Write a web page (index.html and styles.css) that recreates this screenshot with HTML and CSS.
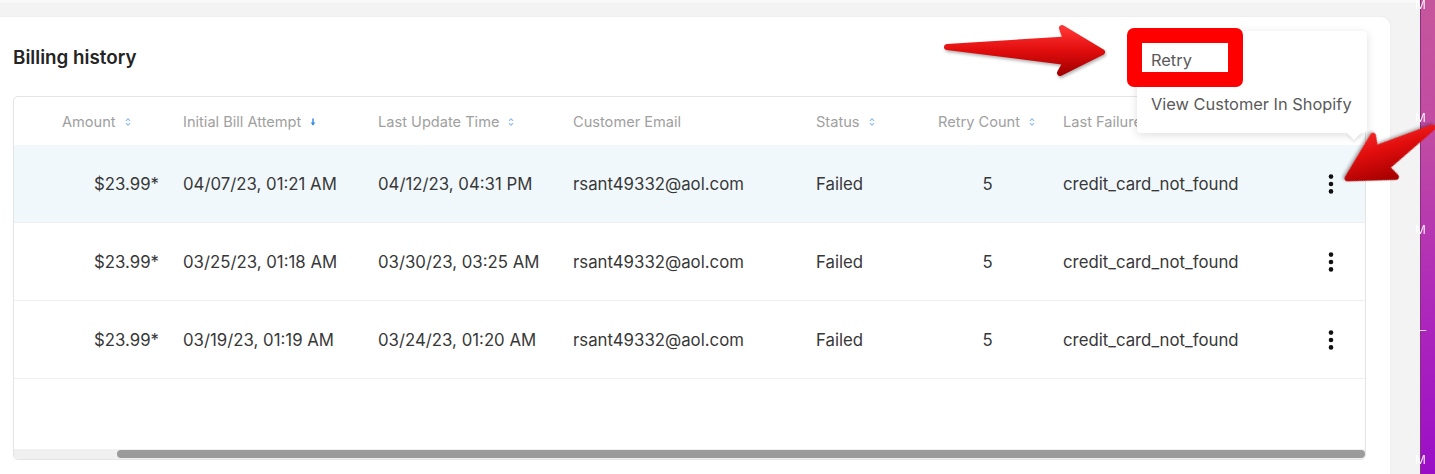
FILE: index.html
```html
<html>
<head>
	<link rel="stylesheet" href="styles.css">
</head>
<body>
<div class="screen">
	<div class="app">
		<div class="card">
			<h2 class="card-title">Billing history</h2>
			<div class="table-wrap">
				<div class="row head">
					<div class="cell amount-head">Amount <svg class="sort" width="6" height="10" viewBox="0 0 6 10"><path d="M1 3.8 L3 1.8 L5 3.8 M1 6.2 L3 8.2 L5 6.2"/></svg></div>
					<div class="cell">Initial Bill Attempt <svg class="sort-down" width="6" height="10" viewBox="0 0 6 10"><path d="M3 1.5 V8"/><path class="tip" d="M0.6 5.4 L3 8.6 L5.4 5.4 Z"/></svg></div>
					<div class="cell">Last Update Time <svg class="sort" width="6" height="10" viewBox="0 0 6 10"><path d="M1 3.8 L3 1.8 L5 3.8 M1 6.2 L3 8.2 L5 6.2"/></svg></div>
					<div class="cell">Customer Email</div>
					<div class="cell">Status <svg class="sort" width="6" height="10" viewBox="0 0 6 10"><path d="M1 3.8 L3 1.8 L5 3.8 M1 6.2 L3 8.2 L5 6.2"/></svg></div>
					<div class="cell">Retry Count <svg class="sort" width="6" height="10" viewBox="0 0 6 10"><path d="M1 3.8 L3 1.8 L5 3.8 M1 6.2 L3 8.2 L5 6.2"/></svg></div>
					<div class="cell">Last Failure Reason</div>
					<div class="cell"></div>
				</div>

				<div class="row body-row active">
					<div class="cell amount">$23.99*</div>
					<div class="cell">04/07/23, 01:21 AM</div>
					<div class="cell">04/12/23, 04:31 PM</div>
					<div class="cell">rsant49332@aol.com</div>
					<div class="cell">Failed</div>
					<div class="cell count">5</div>
					<div class="cell">credit_card_not_found</div>
					<div class="cell more"><svg width="6" height="20" viewBox="0 0 6 20"><circle cx="3" cy="2.6" r="2.3"/><circle cx="3" cy="10" r="2.3"/><circle cx="3" cy="17.4" r="2.3"/></svg></div>
				</div>
				<div class="row body-row">
					<div class="cell amount">$23.99*</div>
					<div class="cell">03/25/23, 01:18 AM</div>
					<div class="cell">03/30/23, 03:25 AM</div>
					<div class="cell">rsant49332@aol.com</div>
					<div class="cell">Failed</div>
					<div class="cell count">5</div>
					<div class="cell">credit_card_not_found</div>
					<div class="cell more"><svg width="6" height="20" viewBox="0 0 6 20"><circle cx="3" cy="2.6" r="2.3"/><circle cx="3" cy="10" r="2.3"/><circle cx="3" cy="17.4" r="2.3"/></svg></div>
				</div>
				<div class="row body-row">
					<div class="cell amount">$23.99*</div>
					<div class="cell">03/19/23, 01:19 AM</div>
					<div class="cell">03/24/23, 01:20 AM</div>
					<div class="cell">rsant49332@aol.com</div>
					<div class="cell">Failed</div>
					<div class="cell count">5</div>
					<div class="cell">credit_card_not_found</div>
					<div class="cell more"><svg width="6" height="20" viewBox="0 0 6 20"><circle cx="3" cy="2.6" r="2.3"/><circle cx="3" cy="10" r="2.3"/><circle cx="3" cy="17.4" r="2.3"/></svg></div>
				</div>

				<div class="table-space"></div>
				<div class="scrollbar"><div class="thumb"></div></div>
			</div>
		</div>
	</div>
	<div class="desktop">
		<span class="desk-label l1">M</span>
		<span class="desk-label l2">M</span>
		<span class="desk-label l3">M</span>
		<span class="desk-label l4">–</span>
		<span class="desk-label l5">M</span>
	</div>

	<div class="menu">
		<div class="menu-item">Retry</div>
		<div class="menu-item">View Customer In Shopify</div>
	</div>
	<div class="highlight"></div>

	<svg class="arrows" width="1435" height="474" viewBox="0 0 1435 474">
		<defs>
			<linearGradient id="red1" x1="0" y1="0" x2="0" y2="1">
				<stop offset="0" stop-color="#ff3434"/>
				<stop offset="0.5" stop-color="#e10d0d"/>
				<stop offset="1" stop-color="#a60000"/>
			</linearGradient>
			<linearGradient id="red2" x1="0" y1="1" x2="0.6" y2="0">
				<stop offset="0" stop-color="#ff3434"/>
				<stop offset="0.5" stop-color="#e10d0d"/>
				<stop offset="1" stop-color="#a60000"/>
			</linearGradient>
		</defs>
		<path class="arrow a1" d="M947 47 L1066 39.5 L1062 28 L1102 52 L1060 73 L1066 62 Z"/>
		<g transform="translate(1345 180) rotate(148.5)">
			<path class="arrow a2" d="M-102 -1 L-42 -11 L-45 -24 L-3 0 L-47 23 L-42 11 Z"/>
		</g>
	</svg>
</div>
</body>
</html>
```
FILE: styles.css
```css
body{
	margin: 0;
	background: #f4f4f4;
	font-family: Inter, "Liberation Sans", sans-serif;
	overflow: hidden;
}
.screen{
	position: relative;
	display: flex;
	width: 1435px;
	height: 474px;
	overflow: hidden;
	background: linear-gradient(#f8f8f8 0, #f8f8f8 2px, #f3f3f3 3px);
}
.app{
	width: 1420px;
	padding: 17px 29px 0 0;
	box-sizing: border-box;
}
.card{
	width: 1390px;
	height: 480px;
	background: #fff;
	border-top-right-radius: 9px;
	box-shadow: 0 0 3px rgba(0,0,0,0.05);
	padding: 29px 24px 0 13px;
	box-sizing: border-box;
}
.card-title{
	margin: 0 0 26px 0;
	font-size: 18.8px;
	font-weight: 600;
	line-height: 24px;
	color: #242424;
}
.table-wrap{
	border: 1px solid #e4e4e4;
	border-radius: 5px;
	overflow: hidden;
	width: 1353px;
	box-sizing: border-box;
}
.row{
	display: grid;
	grid-template-columns: 156px 195px 195px 243px 122px 125px 245px 70px;
	align-items: center;
}
.cell{
	padding-left: 13px;
	white-space: nowrap;
	overflow: hidden;
}
.head{
	height: 48px;
	padding-top: 1px;
	box-sizing: border-box;
	font-size: 14.6px;
	color: #a0a0a0;
}
.head .cell{
	display: flex;
	align-items: center;
}
.head .amount-head{
	padding-left: 48px;
}
.sort, .sort-down{
	margin-left: 9px;
	flex: none;
}
.sort path{
	fill: none;
	stroke: #93bcec;
	stroke-width: 1.2;
}
.sort-down path{
	fill: none;
	stroke: #3b8de3;
	stroke-width: 1.5;
}
.sort-down .tip{
	fill: #3b8de3;
	stroke: none;
}
.body-row{
	height: 77px;
	border-bottom: 1px solid #efefef;
	font-size: 16.8px;
	color: #383838;
}
.active{
	background: #f1f8fc;
}
.amount{
	text-align: right;
	padding: 0 11px 0 0;
}
.count{
	text-align: center;
	padding: 0;
}
.more{
	padding: 0 0 0 2px;
	display: flex;
	justify-content: center;
	align-items: center;
}
.more circle{
	fill: #111;
}
.table-space{
	height: 70px;
}
.scrollbar{
	height: 10px;
	background: #f0f0f0;
	padding: 1px 0 1px 103px;
	box-sizing: border-box;
}
.thumb{
	height: 8px;
	background: #9b9b9b;
	border-radius: 4px;
}
.desktop{
	position: relative;
	flex: 1;
	border-left: 1px solid #8a2f7e;
	background: linear-gradient(#c6569c 0%, #c04aa4 30%, #b02cb8 60%, #9a0ec8 100%);
}
.desk-label{
	position: absolute;
	left: -6px;
	font-size: 13px;
	color: #fff;
	font-family: "Liberation Sans", sans-serif;
	opacity: 0.9;
}
.l1{ top: -3px; }
.l2{ top: 110px; }
.l3{ top: 222px; }
.l4{ top: 322px; left: -2px; }
.l5{ top: 452px; }
.menu{
	position: absolute;
	left: 1137px;
	top: 31px;
	width: 230px;
	padding: 7px 0;
	background: #fff;
	border-radius: 4px;
	box-shadow: 0 2px 9px rgba(0,0,0,0.13);
	box-sizing: border-box;
}
.menu::after{
	content: "";
	position: absolute;
	right: 8px;
	bottom: -5px;
	width: 10px;
	height: 10px;
	background: #fff;
	transform: rotate(45deg);
	box-shadow: 2px 2px 3px rgba(0,0,0,0.07);
}
.menu-item{
	height: 44px;
	line-height: 44px;
	padding-left: 14px;
	font-size: 16.4px;
	color: #5a5a5a;
}
.highlight{
	position: absolute;
	left: 1127px;
	top: 28px;
	width: 116px;
	height: 59px;
	border: 15px solid #ff0000;
	border-radius: 7px;
	box-sizing: border-box;
}
.arrows{
	position: absolute;
	left: 0;
	top: 0;
	pointer-events: none;
}
.arrow{
	stroke-width: 6;
	stroke-linejoin: round;
	filter: drop-shadow(1px 2px 1.5px rgba(0,0,0,0.3));
}
.a1{
	fill: url(#red1);
	stroke: url(#red1);
}
.a2{
	fill: url(#red2);
	stroke: url(#red2);
}
```
